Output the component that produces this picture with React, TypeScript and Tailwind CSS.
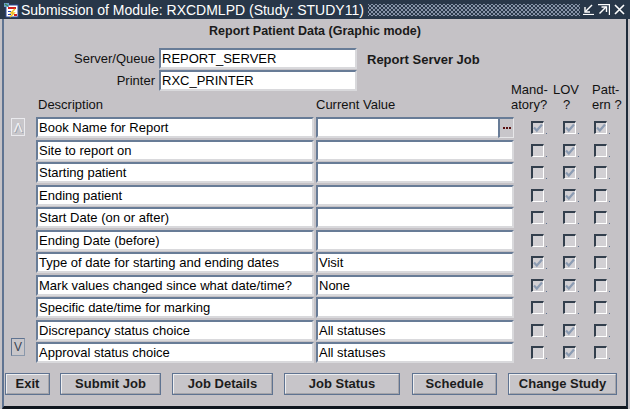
import React from "react";

type Row = { d: string; v: string; c: [boolean, boolean, boolean] };

const rows: Row[] = [
  { d: "Book Name for Report", v: "", c: [true, true, true] },
  { d: "Site to report on", v: "", c: [false, true, false] },
  { d: "Starting patient", v: "", c: [false, true, false] },
  { d: "Ending patient", v: "", c: [false, true, false] },
  { d: "Start Date (on or after)", v: "", c: [false, false, false] },
  { d: "Ending Date (before)", v: "", c: [false, false, false] },
  { d: "Type of date for starting and ending dates", v: "Visit", c: [true, true, false] },
  { d: "Mark values changed since what date/time?", v: "None", c: [true, true, false] },
  { d: "Specific date/time for marking", v: "", c: [false, false, false] },
  { d: "Discrepancy status choice", v: "All statuses", c: [false, true, false] },
  { d: "Approval status choice", v: "All statuses", c: [false, true, false] },
];

function Field({ text, w, children }: { text: string; w: string; children?: React.ReactNode }) {
  return (
    <div
      className={`${w} h-[21px] bg-white border-t-2 border-l-2 border-t-[#687c97] border-l-[#687c97] border-r-2 border-b-2 border-r-[#d9d9dc] border-b-[#d9d9dc] flex items-center relative`}
    >
      <span className="pl-[1px] text-[13px] leading-none text-black whitespace-nowrap">{text}</span>
      {children}
    </div>
  );
}

function Cb({ on }: { on: boolean }) {
  return (
    <div className="w-[31.5px] flex items-end h-[13px]">
      <div className="w-[13px] h-[13px] bg-[#d2d0d4] border-t-2 border-l-2 border-t-[#333f4d] border-l-[#333f4d] border-r border-b border-r-white border-b-white relative">
        {on && (
          <svg className="absolute left-0 top-0" width="10" height="10" viewBox="0 0 10 10">
            <path d="M1 4.5 L3.8 7.5 L9 1.5" stroke="#8c9cb3" strokeWidth="2.2" fill="none" />
          </svg>
        )}
      </div>
      <div className="w-[1px] h-[1px] bg-[#5d7290] ml-[2px]" />
    </div>
  );
}

function Btn({ label, w, ml }: { label: string; w: string; ml: string }) {
  return (
    <div
      className={`${w} ${ml} h-[22px] border border-[#5f7391] bg-[#c7c5c9] flex items-center justify-center`}
    >
      <div className="w-full h-full border-t border-l border-t-[#eeeeef] border-l-[#eeeeef] border-r border-b border-r-[#a5a4a9] border-b-[#a5a4a9] flex items-center justify-center">
        <span className="text-[13px] font-bold text-[#1c1c1c] leading-none">{label}</span>
      </div>
    </div>
  );
}

export default function App() {
  return (
    <div
      className="w-[630px] h-[409px] bg-[#c5c2c6] flex flex-col overflow-hidden"
      style={{ fontFamily: '"Liberation Sans", Arial, sans-serif' }}
    >
      {/* Title bar */}
      <div className="h-[19px] bg-[#283749] flex items-center shrink-0">
        <svg className="ml-[3px] shrink-0" width="16" height="16" viewBox="0 0 16 16">
          <rect x="3" y="3" width="12" height="12" fill="#ffffff" stroke="#2d4c9a" strokeWidth="1" />
          <path d="M1 1 L6 1 L6 5 L1 5 Z" fill="#6aa0c8" />
          <path d="M2 2 L5 4" stroke="#3a8a4a" strokeWidth="1.2" />
          <rect x="5" y="5" width="8" height="2" fill="#d02020" />
          <rect x="5" y="9" width="3" height="1" fill="#2040c0" />
          <rect x="5" y="12" width="3" height="1" fill="#2040c0" />
          <path d="M12 7 L8 11 L11 11 L7 15" stroke="#f0c020" strokeWidth="1.5" fill="none" />
          <rect x="11" y="12" width="3" height="2" fill="#d02020" />
        </svg>
        <span className="ml-[2px] text-[14px] leading-none text-white whitespace-nowrap">
          Submission of Module: RXCDMLPD (Study: STUDY11)
        </span>
        <div className="flex-1 min-w-0 ml-[4px] mr-[3px] h-[12px] bg-[radial-gradient(circle,#8794a9_1px,transparent_1.3px),radial-gradient(circle,#8794a9_1px,transparent_1.3px)] bg-[length:4px_4px] bg-[position:0_0,2px_2px]" />
        <div className="mr-[5px] flex items-center gap-[4px] shrink-0">
          <svg width="11" height="11" viewBox="0 0 11 11">
            <path d="M9 1 L2.5 7.5" stroke="#fff" strokeWidth="1.4" />
            <path d="M2 3 L2 8 L7 8" stroke="#fff" strokeWidth="1.4" fill="none" />
            <path d="M0 10.5 L11 10.5" stroke="#fff" strokeWidth="1.2" />
          </svg>
          <svg width="12" height="11" viewBox="0 0 12 11">
            <path d="M0 0.6 L11.4 0.6 L11.4 11" stroke="#fff" strokeWidth="1.2" fill="none" />
            <path d="M1.5 9.5 L8 3" stroke="#fff" strokeWidth="1.4" />
            <path d="M3.5 3 L8.5 3 L8.5 8" stroke="#fff" strokeWidth="1.4" fill="none" />
          </svg>
          <svg width="11" height="11" viewBox="0 0 11 11">
            <path d="M1 1 L10 10 M10 1 L1 10" stroke="#fff" strokeWidth="1.6" />
          </svg>
        </div>
      </div>

      {/* Body */}
      <div className="flex-1 ml-[2px] mr-[2px] border-l-2 border-l-[#5f7391] border-r-2 border-r-[#1f2b3a] border-b-[3px] border-b-[#10161e] flex flex-col">
        <div className="mt-[5px] h-[14px] text-center text-[12.5px] font-bold leading-[14px] text-[#1a1a1a]">
          Report Patient Data (Graphic mode)
        </div>

        {/* Server / Printer */}
        <div className="mt-[10px] flex flex-col gap-[1px]">
          <div className="flex items-center h-[21px]">
            <div className="w-[151px] text-right text-[13px] leading-none text-[#111]">Server/Queue</div>
            <div className="ml-[4px]">
              <Field text="REPORT_SERVER" w="w-[198px]" />
            </div>
            <div className="ml-[10px] text-[13px] font-bold leading-none text-[#1a1a1a] pt-[2px]">Report Server Job</div>
          </div>
          <div className="flex items-center h-[21px]">
            <div className="w-[151px] text-right text-[13px] leading-none text-[#111]">Printer</div>
            <div className="ml-[4px]">
              <Field text="RXC_PRINTER" w="w-[198px]" />
            </div>
          </div>
        </div>

        {/* Column headers */}
        <div className="-mt-[9px] h-[30px] flex text-[13px] leading-[15px] text-[#111]">
          <div className="w-[34px]" />
          <div className="w-[278px] flex items-end">Description</div>
          <div className="w-[195px] flex items-end">Current Value</div>
          <div className="w-[42px] flex flex-col">
            <span>Mand-</span>
            <span>atory?</span>
          </div>
          <div className="w-[39px] flex flex-col">
            <span>LOV</span>
            <span className="pl-[10px]">?</span>
          </div>
          <div className="flex flex-col">
            <span>Patt-</span>
            <span>ern ?</span>
          </div>
        </div>

        {/* Rows */}
        <div className="mt-[5px] flex">
          <div className="w-[32px] pl-[7px] flex flex-col">
            <div className="mt-[1px] w-[14px] h-[18px] border border-[#eaeaee] bg-[#c8c6ca] flex items-center justify-center">
              <span className="text-[13px] leading-none text-[#f4f4f6] [text-shadow:1px_1px_0_#9aa3b0]">Λ</span>
            </div>
            <div className="mt-[202px] w-[14px] h-[18px] border border-[#5f7391] border-r-[#8a98ab] border-b-[#8a98ab] bg-[#c8c6ca] flex items-center justify-center">
              <span className="text-[12px] leading-none text-[#3a4452]">V</span>
            </div>
          </div>
          <div className="flex flex-col">
            {rows.map((r, i) => (
              <div key={i} className="h-[22.5px] flex items-start">
                <Field text={r.d} w="w-[278px]" />
                <div className="ml-[2px]">
                  <Field text={r.v} w="w-[198px]">
                    {i === 0 && (
                      <div className="absolute right-[-2px] top-[-2px] w-[16px] h-[21px] bg-[#c8c6ca] border-t-2 border-l-2 border-[#687c97] border-r border-b border-r-[#e6e6e8] border-b-[#e6e6e8] flex items-center justify-center gap-[1px]">
                        <div className="w-[2px] h-[2px] bg-[#5a1010]" />
                        <div className="w-[2px] h-[2px] bg-[#5a1010]" />
                        <div className="w-[2px] h-[2px] bg-[#5a1010]" />
                      </div>
                    )}
                  </Field>
                </div>
                <div className="ml-[17px] h-[21px] flex items-center">
                  <Cb on={r.c[0]} />
                  <Cb on={r.c[1]} />
                  <Cb on={r.c[2]} />
                </div>
              </div>
            ))}
          </div>
        </div>

        {/* Buttons */}
        <div className="mt-[8px] flex">
          <Btn label="Exit" w="w-[45px]" ml="ml-[1px]" />
          <Btn label="Submit Job" w="w-[101px]" ml="ml-[10px]" />
          <Btn label="Job Details" w="w-[101px]" ml="ml-[11px]" />
          <Btn label="Job Status" w="w-[116px]" ml="ml-[11px]" />
          <Btn label="Schedule" w="w-[85px]" ml="ml-[12px]" />
          <Btn label="Change Study" w="w-[109px]" ml="ml-[11px]" />
        </div>
      </div>
    </div>
  );
}
